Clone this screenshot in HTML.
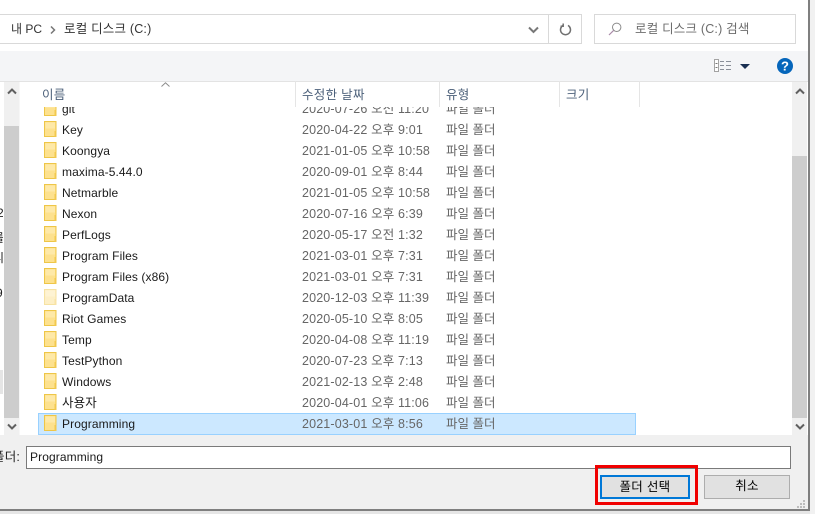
<!DOCTYPE html>
<html lang="ko"><head><meta charset="utf-8">
<style>
html,body{margin:0;padding:0;background:#fff}
body{width:815px;height:514px;position:relative;overflow:hidden;font:12.5px/21px "Liberation Sans","Noto Sans CJK KR",sans-serif;color:#1a1a1a}
.a{position:absolute;box-sizing:border-box;white-space:nowrap}
.r{position:absolute;left:0;width:800px;height:21px}
.r svg{position:absolute;left:44px;top:2px}
.r b,.r i,.r u{position:absolute;font-weight:400;font-style:normal;text-decoration:none;top:1px;white-space:nowrap}
.r b{left:62px;font-size:12px;letter-spacing:.1px}
.r b.k{font-size:12.5px;letter-spacing:.15px}
.r i{left:302px;color:#666;letter-spacing:.15px}
.r u{left:446px;color:#666}
.h{position:absolute;top:0;width:1px;height:26px;background:#e5e5e5}
</style></head><body>
<svg width="0" height="0" style="position:absolute"><defs>
<symbol id="f" viewBox="0 0 13 16"><rect x=".5" y=".5" width="11.500" height="15" fill="#fde18e" stroke="#eec647"/><rect x="1.500" y="1.500" width="9.500" height="6" fill="#fee9a8"/><rect x="10.500" y="10" width="2" height="6" fill="#f2c94f"/></symbol>
</defs></svg>

<!-- window edges -->
<div class="a" style="left:808px;top:0;width:7px;height:514px;background:#f1f1f1"></div>
<div class="a" style="left:808px;top:0;width:2px;height:511px;background:#7f7f7f"></div>
<div class="a" style="left:0;top:510px;width:810px;height:4px;background:#e6e6e6"></div>
<div class="a" style="left:0;top:509px;width:810px;height:2px;background:#7f7f7f"></div>

<!-- address bar -->
<div class="a" style="left:-2px;top:14px;width:584px;height:30px;border:1px solid #d9d9d9;background:#fff"></div>
<div class="a" style="left:548px;top:15px;width:1px;height:28px;background:#d9d9d9"></div>
<div class="a" style="left:11px;top:19px;color:#333;font-size:12px">내 PC</div>
<svg class="a" style="left:50px;top:26px" width="6" height="8" viewBox="0 0 6 8"><path d="M1 .5 4.500 4 1 7.500" fill="none" stroke="#777" stroke-width="1.500"/></svg>
<div class="a" style="left:64px;top:19px;color:#333;font-size:12.5px;letter-spacing:.2px">로컬 디스크 (C:)</div>
<svg class="a" style="left:528px;top:26px" width="11" height="8" viewBox="0 0 11 8"><path d="M1 1.500 5.500 6 10 1.500" fill="none" stroke="#777" stroke-width="2"/></svg>
<svg class="a" style="left:559px;top:23px" width="13" height="13" viewBox="0 0 13 13"><path d="M4 2.400A5 5 0 1 0 9 2.400M4.200 .5V3.300H1.500" fill="none" stroke="#707070" stroke-width="1.500"/></svg>

<!-- search -->
<div class="a" style="left:594px;top:14px;width:202px;height:30px;border:1px solid #d9d9d9;background:#fff"></div>
<svg class="a" style="left:608px;top:22px" width="14" height="14" viewBox="0 0 14 14"><circle cx="8.700" cy="5.300" r="4.200" fill="none" stroke="#8a8a8a" stroke-width="1"/><path d="M5.600 8.400 1 13" stroke="#a98aa8" stroke-width="1.200"/></svg>
<div class="a" style="left:635px;top:19px;color:#6d6d6d;font-size:12.5px;letter-spacing:.2px">로컬 디스크 (C:) 검색</div>

<!-- toolbar -->
<div class="a" style="left:0;top:51px;width:808px;height:30px;background:#f4f5f7"></div>
<div class="a" style="left:0;top:81px;width:808px;height:1px;background:#e3e3e3"></div>
<svg class="a" style="left:714px;top:59px" width="18" height="13" viewBox="0 0 18 13"><rect x=".5" y=".5" width="4" height="12" fill="#fff" stroke="#a3a3a3"/><path d="M1.500 4.500h2M1.500 8.500h2" stroke="#777"/><path d="M6 2.500h4M12 2.500h5M6 6.500h4M12 6.500h5M6 10.500h4M12 10.500h5" stroke="#8a8f98"/></svg>
<svg class="a" style="left:740px;top:64px" width="10" height="5" viewBox="0 0 10 5"><path d="M0 0H10L5 5Z" fill="#192f52"/></svg>
<svg class="a" style="left:777px;top:58px" width="16" height="16" viewBox="0 0 16 16"><circle cx="8" cy="8" r="8" fill="#0566bb"/><text x="8" y="12.600" text-anchor="middle" font-family="Liberation Sans" font-weight="700" font-size="13" fill="#fff">?</text></svg>

<!-- left scrollbar + clipped tree -->
<div class="a" style="left:4px;top:82px;width:15px;height:353px;background:#f0f0f0"></div>
<div class="a" style="left:4px;top:126px;width:15px;height:292px;background:#cdcdcd"></div>
<div class="a" style="left:19px;top:82px;width:1px;height:353px;background:#f7f7f7"></div>
<svg class="a" style="left:7px;top:88px" width="10" height="7" viewBox="0 0 10 7"><path d="M1 5.500 5 1.500 9 5.500" fill="none" stroke="#606060" stroke-width="2"/></svg>
<svg class="a" style="left:7px;top:423px" width="10" height="7" viewBox="0 0 10 7"><path d="M1 1.500 5 5.500 9 1.500" fill="none" stroke="#606060" stroke-width="2"/></svg>
<div class="a" style="left:0;top:370px;width:3px;height:24px;background:#e5e5e5"></div>
<div class="a" style="left:-3px;top:203px;width:6px;overflow:hidden;color:#222;font-size:12px">2</div>
<div class="a" style="left:-7px;top:228px;width:10px;overflow:hidden;color:#222;font-size:12px">를</div>
<div class="a" style="left:-7px;top:248px;width:10px;overflow:hidden;color:#222;font-size:12px">피</div>
<div class="a" style="left:-4px;top:283px;width:7px;overflow:hidden;color:#222;font-size:12px">9</div>

<!-- header -->
<div class="a" style="left:42px;top:85px;color:#4c607a;font-size:12.5px;letter-spacing:.3px">이름</div>
<div class="a" style="left:302px;top:85px;color:#4c607a;font-size:12.5px;letter-spacing:.3px">수정한 날짜</div>
<div class="a" style="left:446px;top:85px;color:#4c607a;font-size:12.5px;letter-spacing:.3px">유형</div>
<div class="a" style="left:566px;top:85px;color:#4c607a;font-size:12.5px;letter-spacing:.3px">크기</div>
<svg class="a" style="left:161px;top:82px" width="9" height="5" viewBox="0 0 9 5"><path d="M.5 4.500 4.500 .8 8.500 4.500" fill="none" stroke="#8a8a8a"/></svg>
<div style="position:absolute;left:0;top:81px;width:0;height:0">
<div class="h" style="left:295px"></div><div class="h" style="left:439px"></div><div class="h" style="left:559px"></div><div class="h" style="left:639px"></div>
</div>

<!-- list -->
<div class="a" style="left:0;top:107px;width:790px;height:328px;overflow:hidden">
<div class="a" style="left:38px;top:306px;width:598px;height:22px;background:#cce8ff;border:1px solid #99d1ff"></div>
<div class="r" style="top:-9px"><svg width="13" height="16"><use href="#f"/></svg><b>git</b><i>2020-07-26 오전 11:20</i><u>파일 폴더</u></div>
<div class="r" style="top:12px"><svg width="13" height="16"><use href="#f"/></svg><b>Key</b><i>2020-04-22 오후 9:01</i><u>파일 폴더</u></div>
<div class="r" style="top:33px"><svg width="13" height="16"><use href="#f"/></svg><b>Koongya</b><i>2021-01-05 오후 10:58</i><u>파일 폴더</u></div>
<div class="r" style="top:54px"><svg width="13" height="16"><use href="#f"/></svg><b>maxima-5.44.0</b><i>2020-09-01 오후 8:44</i><u>파일 폴더</u></div>
<div class="r" style="top:75px"><svg width="13" height="16"><use href="#f"/></svg><b>Netmarble</b><i>2021-01-05 오후 10:58</i><u>파일 폴더</u></div>
<div class="r" style="top:96px"><svg width="13" height="16"><use href="#f"/></svg><b>Nexon</b><i>2020-07-16 오후 6:39</i><u>파일 폴더</u></div>
<div class="r" style="top:117px"><svg width="13" height="16"><use href="#f"/></svg><b>PerfLogs</b><i>2020-05-17 오전 1:32</i><u>파일 폴더</u></div>
<div class="r" style="top:138px"><svg width="13" height="16"><use href="#f"/></svg><b>Program Files</b><i>2021-03-01 오후 7:31</i><u>파일 폴더</u></div>
<div class="r" style="top:159px"><svg width="13" height="16"><use href="#f"/></svg><b>Program Files (x86)</b><i>2021-03-01 오후 7:31</i><u>파일 폴더</u></div>
<div class="r" style="top:180px"><svg width="13" height="16" style="opacity:.5"><use href="#f"/></svg><b>ProgramData</b><i>2020-12-03 오후 11:39</i><u>파일 폴더</u></div>
<div class="r" style="top:201px"><svg width="13" height="16"><use href="#f"/></svg><b>Riot Games</b><i>2020-05-10 오후 8:05</i><u>파일 폴더</u></div>
<div class="r" style="top:222px"><svg width="13" height="16"><use href="#f"/></svg><b>Temp</b><i>2020-04-08 오후 11:19</i><u>파일 폴더</u></div>
<div class="r" style="top:243px"><svg width="13" height="16"><use href="#f"/></svg><b>TestPython</b><i>2020-07-23 오후 7:13</i><u>파일 폴더</u></div>
<div class="r" style="top:264px"><svg width="13" height="16"><use href="#f"/></svg><b>Windows</b><i>2021-02-13 오후 2:48</i><u>파일 폴더</u></div>
<div class="r" style="top:285px"><svg width="13" height="16"><use href="#f"/></svg><b class="k">사용자</b><i>2020-04-01 오후 11:06</i><u>파일 폴더</u></div>
<div class="r" style="top:306px"><svg width="13" height="16"><use href="#f"/></svg><b>Programming</b><i>2021-03-01 오후 8:56</i><u>파일 폴더</u></div>
</div>

<!-- right scrollbar -->
<div class="a" style="left:792px;top:82px;width:15px;height:353px;background:#f0f0f0"></div>
<div class="a" style="left:792px;top:156px;width:15px;height:262px;background:#cdcdcd"></div>
<svg class="a" style="left:795px;top:88px" width="10" height="7" viewBox="0 0 10 7"><path d="M1 5.500 5 1.500 9 5.500" fill="none" stroke="#606060" stroke-width="2"/></svg>
<svg class="a" style="left:795px;top:423px" width="10" height="7" viewBox="0 0 10 7"><path d="M1 1.500 5 5.500 9 1.500" fill="none" stroke="#606060" stroke-width="2"/></svg>

<!-- bottom panel -->
<div class="a" style="left:0;top:435px;width:808px;height:74px;background:#f0f0f0"></div>
<div class="a" style="left:-7px;top:447px;color:#222;font-size:12.5px;letter-spacing:.2px">폴더:</div>
<div class="a" style="left:26px;top:446px;width:765px;height:23px;background:#fff;border:1px solid #7a7a7a;line-height:21px;padding-left:3px;font-size:12px;letter-spacing:.1px">Programming</div>
<div class="a" style="left:595px;top:465px;width:103px;height:40px;border:3px solid #f00000"></div>
<div class="a" style="left:600px;top:475px;width:90px;height:24px;background:#e1e1e1;border:2px solid #0078d7;text-align:center;line-height:20px;color:#000;font-size:12.5px;letter-spacing:.3px">폴더 선택</div>
<div class="a" style="left:704px;top:475px;width:86px;height:24px;background:#e1e1e1;border:1px solid #adadad;text-align:center;line-height:21px;color:#000;font-size:12.5px;letter-spacing:.3px">취소</div>
<svg class="a" style="left:796px;top:499px" width="10" height="10" viewBox="0 0 10 10"><path d="M7 1h2v2H7zM4 4h2v2H4zM7 4h2v2H7zM1 7h2v2H1zM4 7h2v2H4zM7 7h2v2H7z" fill="#bdbdbd"/></svg>
</body></html>
